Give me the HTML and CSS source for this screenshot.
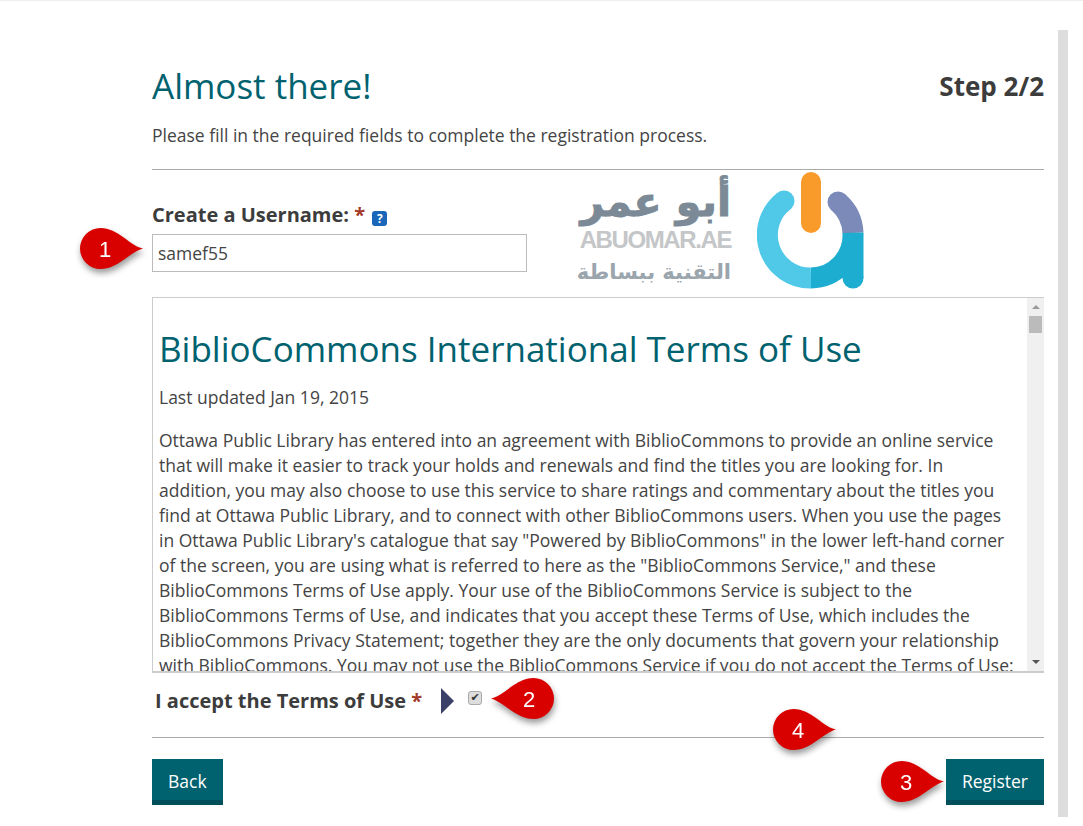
FILE: index.html
```html
<!DOCTYPE html>
<html lang="en">
<head>
    <meta charset="UTF-8">
    <title>Almost there!</title>
    <link rel="stylesheet" href="styles.css">
</head>
<body>
    <div class="page">
        <main class="main">
            <div class="title-row">
                <h1 class="title">Almost there!</h1>
                <div class="step">Step 2/2</div>
            </div>
            <p class="intro">Please fill in the required fields to complete the registration process.</p>
            <hr class="rule">
            <div class="username">
                <label class="field-label" for="username">Create a Username: <span class="req">*</span> <span class="help">?</span></label>
                <input class="text-input" type="text" id="username" value="samef55">
            </div>
            <div class="terms">
                <div class="terms-body">
                    <h2 class="terms-title">BiblioCommons International Terms of Use</h2>
                    <p class="terms-date">Last updated Jan 19, 2015</p>
                    <p class="terms-text">Ottawa Public Library has entered into an agreement with BiblioCommons to provide an online service that will make it easier to track your holds and renewals and find the titles you are looking for. In addition, you may also choose to use this service to share ratings and commentary about the titles you find at Ottawa Public Library, and to connect with other BiblioCommons users. When you use the pages in Ottawa Public Library's catalogue that say "Powered by BiblioCommons" in the lower left-hand corner of the screen, you are using what is referred to here as the "BiblioCommons Service," and these BiblioCommons Terms of Use apply. Your use of the BiblioCommons Service is subject to the BiblioCommons Terms of Use, and indicates that you accept these Terms of Use, which includes the BiblioCommons Privacy Statement; together they are the only documents that govern your relationship with BiblioCommons. You may not use the BiblioCommons Service if you do not accept the Terms of Use:</p>
                </div>
                <div class="scrollbar">
                    <span class="arrow-up"></span>
                    <span class="thumb"></span>
                    <span class="arrow-down"></span>
                </div>
            </div>
            <div class="accept">
                <label class="field-label" for="accept">I accept the Terms of Use <span class="req">*</span></label>
                <span class="pointer"></span>
                <input class="check" type="checkbox" id="accept" checked>
            </div>
            <hr class="rule">
            <div class="actions">
                <button class="btn" type="button">Back</button>
                <button class="btn" type="button">Register</button>
            </div>
        </main>
        <div class="page-track"></div>
    </div>

    <!-- watermark logo -->
    <div class="logo">
        <div class="logo-text">
            <div class="logo-ar">أبو عمر</div>
            <div class="logo-en">ABUOMAR.AE</div>
            <div class="logo-sub">التقنية ببساطة</div>
        </div>
        <svg class="logo-mark" viewBox="0 0 108 118" width="108" height="118">
            <g fill="none" stroke-width="21">
                <path d="M27 29A43 43 0 0 0 54 106" stroke="#50c8e8"/>
                <path d="M81 30A43 43 0 0 1 96 61" stroke="#7b8ab8"/>
                <path d="M54 106A42 43 0 0 0 96 61V106" stroke="#1cadd0"/>
            </g>
            <circle cx="27" cy="29" r="10.5" fill="#50c8e8"/>
            <circle cx="81" cy="30" r="10.5" fill="#7b8ab8"/>
            <circle cx="96" cy="106" r="10.5" fill="#1cadd0"/>
            <rect x="44" y="0" width="20" height="61" rx="10" fill="#f99b2a"/>
        </svg>
    </div>

    <!-- red step markers -->
    <div class="callout callout-1">
        <svg viewBox="0 0 64 41" width="64" height="41"><path d="M63 20.5C50 18 38 0 20.5 0A20.5 20.5 0 0 0 20.5 41C38 41 50 24 63 20.5Z"/></svg>
        <span class="callout-num">1</span>
    </div>
    <div class="callout callout-2 flip">
        <svg viewBox="0 0 64 41" width="64" height="41"><path d="M1 20.5C14 18 26 0 43.5 0A20.5 20.5 0 0 1 43.5 41C26 41 14 24 1 20.5Z"/></svg>
        <span class="callout-num">2</span>
    </div>
    <div class="callout callout-3">
        <svg viewBox="0 0 64 41" width="64" height="41"><path d="M63 20.5C50 18 38 0 20.5 0A20.5 20.5 0 0 0 20.5 41C38 41 50 24 63 20.5Z"/></svg>
        <span class="callout-num">3</span>
    </div>
    <div class="callout callout-4">
        <svg viewBox="0 0 64 41" width="64" height="41"><path d="M63 20.5C50 18 38 0 20.5 0A20.5 20.5 0 0 0 20.5 41C38 41 50 24 63 20.5Z"/></svg>
        <span class="callout-num">4</span>
    </div>
</body>
</html>
```

FILE: styles.css
```css
/* Base */
*{box-sizing:border-box}
html,body{height:100%}
body{margin:0;background:#fff;color:#444;font-family:"Open Sans",sans-serif;font-size:17.5px;overflow:hidden;border-top:1px solid #eee}
.page{display:flex;gap:14px;padding:29px 15px 0 152px}
.main{width:892px;flex:none}
.page-track{width:10px;height:787px;background:#ddd;flex:none}
/* Heading */
.title-row{display:flex;justify-content:space-between;align-items:center;padding-top:31px}
.title{margin:0;font-size:35px;font-weight:400;line-height:50px;color:#00626f}
.step{font-size:26px;font-weight:700;color:#3c3c3c}
.intro{margin:12px 0 21px;font-size:17.5px;line-height:25px}
.rule{margin:0;border:0;border-top:1px solid #aaa}
/* Username */
.username{padding-top:32px}
.field-label{display:block;font-size:20px;font-weight:700;line-height:26px;color:#3c3c3c}
.req{color:#a33a2a}
.help{display:inline-block;width:15px;height:15px;margin-left:2px;border-radius:3px;background:#1a66b8;color:#fff;font-size:12px;line-height:15px;text-align:center;vertical-align:-1px}
.text-input{display:block;width:375px;height:38px;margin-top:6px;padding:0 5px;border:1px solid #bbb;background:#fff;color:#444;font:17.5px "Open Sans",sans-serif}
/* Terms box */
.terms{display:flex;height:376px;margin-top:25px;border:1px solid #ccc;border-width:1px 0 2px 1px;overflow:hidden}
.terms-body{flex:1;min-width:0;padding:0 12px 0 6px}
.terms-title{margin:24px 0 0;font-size:35px;font-weight:400;line-height:54px;color:#00626f}
.terms-date{margin:9px 0 0;line-height:25px}
.terms-text{margin:18px 0 0;line-height:25px}
.scrollbar{display:flex;flex-direction:column;align-items:center;width:17px;background:#f0f0f0;flex:none}
.arrow-up{width:0;height:0;margin-top:7px;border:4px solid transparent;border-top:0;border-bottom:4px solid #999}
.thumb{width:13px;height:17px;margin-top:7px;background:#bbb}
.arrow-down{width:0;height:0;margin-top:auto;margin-bottom:7px;border:4px solid transparent;border-bottom:0;border-top:4px solid #555}
/* Accept row */
.accept{display:flex;align-items:center;height:64px;padding:0 0 9px 3px}
.accept .field-label{width:286px}
.pointer{width:0;height:0;border-style:solid;border-width:13px 0 13px 13px;border-color:transparent transparent transparent #3a4068}
.check{appearance:none;position:relative;width:14px;height:14px;margin:0 0 6px 14px;border:1px solid #aaa;border-radius:3px;background:#ddd}
.check:checked::before{content:"\2714";position:absolute;inset:0;font:11px/12px "DejaVu Sans",sans-serif;color:#333;text-align:center}
/* Buttons */
.actions{display:flex;justify-content:space-between;padding-top:21px}
.btn{height:46px;padding:2px 16px 0;border:0;border-bottom:5px solid #004f5b;background:#00626f;color:#fff;font:17.5px "Open Sans",sans-serif}
/* Logo overlay */
.logo{position:absolute;left:578px;top:172px;display:flex;gap:26px}
.logo-text{width:153px;text-align:right;padding-top:6px}
.logo-ar{font:700 41px/48px "DejaVu Sans",sans-serif;-webkit-text-stroke:1px #7b8a96;color:#7b8a96;white-space:nowrap;direction:rtl}
.logo-en{font:700 24px/28px "Liberation Sans",sans-serif;letter-spacing:-1.4px;color:#c4c6c8}
.logo-sub{margin-top:3px;font:700 21px/30px "DejaVu Sans",sans-serif;color:#9aa5ad;white-space:nowrap;direction:rtl}
.logo-mark{display:block}
/* Red markers */
.callout{position:absolute;width:64px;height:41px;filter:drop-shadow(1px 4px 3px rgba(0,0,0,.4))}
.callout svg{display:block;fill:#d90000}
.callout-num{position:absolute;left:0;top:1px;width:50px;font:22px/41px "Liberation Sans",sans-serif;color:#fff;text-align:center}
.flip .callout-num{left:14px}
.callout-1{left:80px;top:228px}
.callout-2{left:490px;top:678px}
.callout-3{left:881px;top:761px}
.callout-4{left:773px;top:709px}
```
